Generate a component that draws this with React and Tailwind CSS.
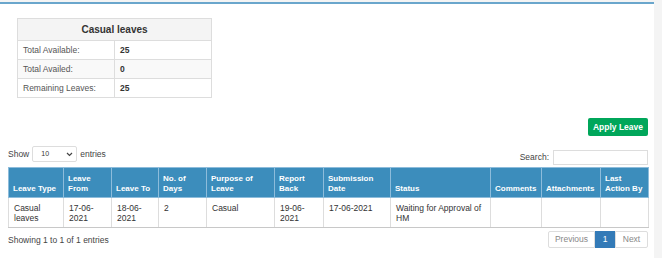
import React from "react";

const cols = [
  { h: ["Leave Type"], w: 55 },
  { h: ["Leave", "From"], w: 48 },
  { h: ["Leave To"], w: 47 },
  { h: ["No. of", "Days"], w: 48 },
  { h: ["Purpose of", "Leave"], w: 68 },
  { h: ["Report", "Back"], w: 49 },
  { h: ["Submission", "Date"], w: 67 },
  { h: ["Status"], w: 100 },
  { h: ["Comments"], w: 51 },
  { h: ["Attachments"], w: 59 },
  { h: ["Last", "Action By"], w: 48 },
];

const row = [
  ["Casual", "leaves"],
  ["17-06-", "2021"],
  ["18-06-", "2021"],
  ["2"],
  ["Casual"],
  ["19-06-", "2021"],
  ["17-06-2021"],
  ["Waiting for Approval of", "HM"],
  [],
  [],
  [],
];

export default function App() {
  return (
    <div
      className="w-[662px] h-[258px] bg-[#f4f4f4] flex overflow-hidden"
      style={{ fontFamily: '"Liberation Sans", Arial, sans-serif' }}
    >
      <div className="w-[654px] h-[256px] mt-[2px] bg-white border-t-2 border-[#6aa6cc] pl-[8px] pr-[6px] flex flex-col">
        {/* Casual leaves summary */}
        <table className="ml-[9px] mt-[14px] w-[195px] border-collapse text-[8.5px] text-[#555]">
          <tbody>
            <tr className="h-[22px] bg-[#f4f4f4]">
              <th colSpan={2} className="border border-[#ddd] text-[10px] font-bold text-[#333] text-center">
                Casual leaves
              </th>
            </tr>
            <tr className="h-[19px] bg-white">
              <td className="border border-[#ddd] w-[97px] pl-[5px]">Total Available:</td>
              <td className="border border-[#ddd] pl-[5px] font-bold text-[#333]">25</td>
            </tr>
            <tr className="h-[19px] bg-[#f9f9f9]">
              <td className="border border-[#ddd] pl-[5px]">Total Availed:</td>
              <td className="border border-[#ddd] pl-[5px] font-bold text-[#333]">0</td>
            </tr>
            <tr className="h-[19px] bg-white">
              <td className="border border-[#ddd] pl-[5px]">Remaining Leaves:</td>
              <td className="border border-[#ddd] pl-[5px] font-bold text-[#333]">25</td>
            </tr>
          </tbody>
        </table>

        {/* Apply button */}
        <div className="flex justify-end mt-[20px]">
          <button className="w-[60px] h-[18px] bg-[#00a65a] rounded-[2px] text-white text-[8.5px] font-bold">
            Apply Leave
          </button>
        </div>

        {/* Show / Search row */}
        <div className="flex items-end justify-between mt-[10px] h-[18px] text-[8.5px] text-[#444]">
          <div className="flex items-center gap-[3px] h-[16px] mb-[2px]">
            <span>Show</span>
            <div className="w-[45px] h-[16px] border border-[#ddd] rounded-[2px] flex items-center justify-between pl-[8px] pr-[3px] text-[7px] text-[#333]">
              <span>10</span>
              <svg width="7" height="5" viewBox="0 0 7 5">
                <path d="M1 1 L3.5 3.5 L6 1" stroke="#444" strokeWidth="1.2" fill="none" />
              </svg>
            </div>
            <span>entries</span>
          </div>
          <div className="flex items-center gap-[4px] h-[16px] mb-[-1px]">
            <span>Search:</span>
            <div className="w-[95px] h-[15px] border border-[#ddd]" />
          </div>
        </div>

        {/* Main table */}
        <table className="mt-[3px] w-[640px] border-collapse table-fixed">
          <colgroup>
            {cols.map((c, i) => (
              <col key={i} style={{ width: c.w }} />
            ))}
          </colgroup>
          <thead>
            <tr className="h-[30px] bg-[#3c8dbc]">
              {cols.map((c, i) => (
                <th
                  key={i}
                  className="border border-[#8dbcdb] align-bottom text-left pl-[4px] pb-[3px] text-white font-bold text-[8px] leading-[10px]"
                >
                  {c.h.map((t, j) => (
                    <div key={j} className="whitespace-nowrap">{t}</div>
                  ))}
                </th>
              ))}
            </tr>
          </thead>
          <tbody>
            <tr className="h-[30px] bg-white">
              {row.map((r, i) => (
                <td
                  key={i}
                  className="border border-[#ddd] border-b-[#c8c8c8] align-top text-left pl-[5px] pt-[5px] text-[#333] text-[8.5px] leading-[10px]"
                >
                  {r.map((t, j) => (
                    <div key={j} className="whitespace-nowrap">{t}</div>
                  ))}
                </td>
              ))}
            </tr>
          </tbody>
        </table>

        {/* Footer */}
        <div className="flex items-start justify-between mt-[3px] text-[8.5px] text-[#444]">
          <span className="mt-[3px]">Showing 1 to 1 of 1 entries</span>
          <div className="flex h-[17px] text-[8.5px]">
            <div className="w-[47px] border border-[#ddd] rounded-l-[2px] flex items-center justify-center text-[#888]">
              Previous
            </div>
            <div className="w-[20px] bg-[#337ab7] flex items-center justify-center text-white">1</div>
            <div className="w-[33px] border border-[#ddd] rounded-r-[2px] flex items-center justify-center text-[#888]">
              Next
            </div>
          </div>
        </div>
      </div>
    </div>
  );
}
